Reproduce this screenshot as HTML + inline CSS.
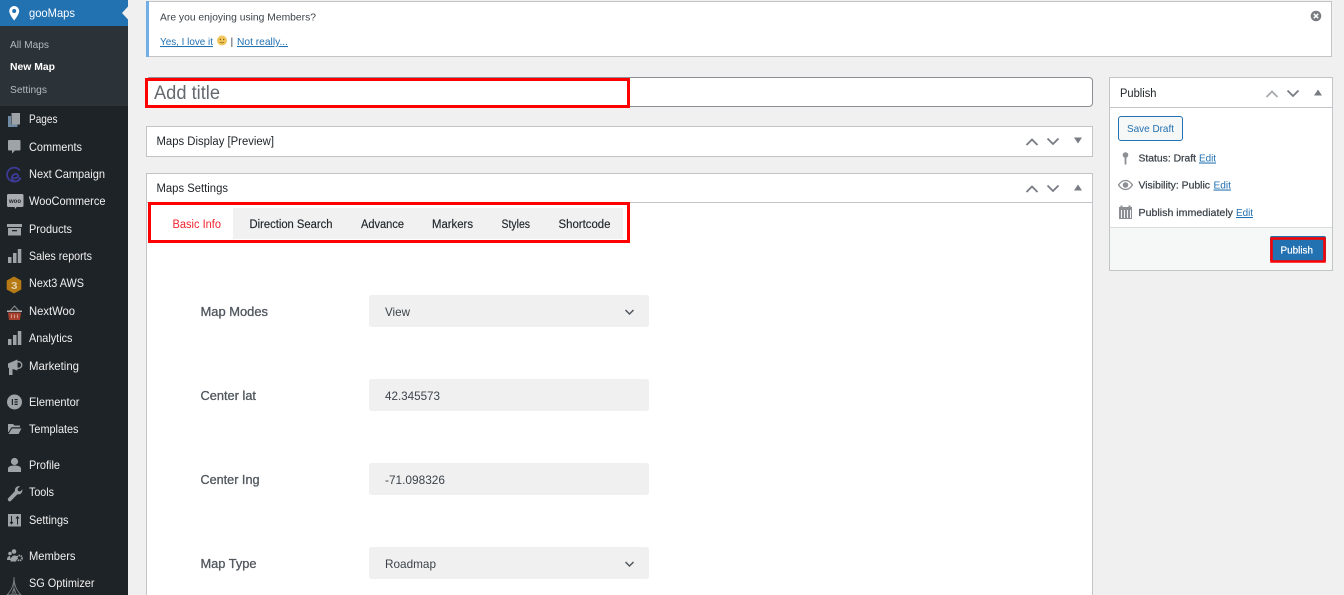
<!DOCTYPE html>
<html lang="en">
<head>
<meta charset="utf-8">
<title>Add New Map</title>
<style>
html,body{margin:0;padding:0;width:1344px;height:595px;overflow:hidden;background:#f0f0f0}
svg{display:block;position:absolute;left:0;top:0}
text{font-family:"Liberation Sans",sans-serif;font-size:12px}
.m{fill:#f0f0f1;font-size:12px}
.s{fill:#b4b9be;font-size:10.5px}
.d{fill:#3c434a;font-size:10.500px}
.l{fill:#2271b1;font-size:10.500px;text-decoration:underline}
.h{fill:#1d2327;font-size:11.500px}
.lb{fill:#50575e;font-size:12.500px;stroke:#50575e;stroke-width:.3px}
.v{fill:#3c434a;font-size:12px}
.t{fill:#1d2327;font-size:11.500px;stroke:#1d2327;stroke-width:.15px}
.ic{fill:#9ea3a8}
.ch{fill:none;stroke:#787c82;stroke-width:1.800}
.b{stroke:#3c434a;stroke-width:.25px}
</style>
</head>
<body>
<svg width="1344" height="595" viewBox="0 0 1344 595" xmlns="http://www.w3.org/2000/svg">
<rect width="1344" height="595" fill="#f0f0f0"/>

<!-- sidebar -->
<rect width="128" height="595" fill="#1d2327"/>
<rect y="26" width="128" height="80" fill="#2c3338"/>
<rect width="128" height="26" fill="#2271b1"/>
<path d="M128 6.500L122 13L128 19.500Z" fill="#f0f0f0"/>
<path d="M14.200 6a5 5 0 0 0-5 5c0 3.500 5 9.500 5 9.500s5-6 5-9.500a5 5 0 0 0-5-5z" fill="#fff"/>
<circle cx="14.200" cy="11" r="2" fill="#2271b1"/>

<text class="m" x="29" y="17" textLength="46" lengthAdjust="spacingAndGlyphs" style="fill:#fff">gooMaps</text>
<text class="s" x="10" y="48" textLength="39" lengthAdjust="spacingAndGlyphs">All Maps</text>
<text class="s" x="10" y="70" textLength="45" lengthAdjust="spacingAndGlyphs" style="fill:#fff;font-weight:700">New Map</text>
<text class="s" x="10" y="93" textLength="37" lengthAdjust="spacingAndGlyphs">Settings</text>

<text class="m" x="29" y="123" textLength="28.500" lengthAdjust="spacingAndGlyphs">Pages</text>
<text class="m" x="29" y="151" textLength="53" lengthAdjust="spacingAndGlyphs">Comments</text>
<text class="m" x="29" y="178" textLength="76" lengthAdjust="spacingAndGlyphs">Next Campaign</text>
<text class="m" x="29" y="205" textLength="76.500" lengthAdjust="spacingAndGlyphs">WooCommerce</text>
<text class="m" x="29" y="233" textLength="43" lengthAdjust="spacingAndGlyphs">Products</text>
<text class="m" x="29" y="260" textLength="63" lengthAdjust="spacingAndGlyphs">Sales reports</text>
<text class="m" x="29" y="287" textLength="55" lengthAdjust="spacingAndGlyphs">Next3 AWS</text>
<text class="m" x="29" y="315" textLength="46" lengthAdjust="spacingAndGlyphs">NextWoo</text>
<text class="m" x="29" y="342" textLength="43.500" lengthAdjust="spacingAndGlyphs">Analytics</text>
<text class="m" x="29" y="370" textLength="50" lengthAdjust="spacingAndGlyphs">Marketing</text>
<text class="m" x="29" y="406" textLength="50.500" lengthAdjust="spacingAndGlyphs">Elementor</text>
<text class="m" x="29" y="433" textLength="49.500" lengthAdjust="spacingAndGlyphs">Templates</text>
<text class="m" x="29" y="469" textLength="31" lengthAdjust="spacingAndGlyphs">Profile</text>
<text class="m" x="29" y="496" textLength="25" lengthAdjust="spacingAndGlyphs">Tools</text>
<text class="m" x="29" y="524" textLength="39.500" lengthAdjust="spacingAndGlyphs">Settings</text>
<text class="m" x="29" y="560" textLength="46.500" lengthAdjust="spacingAndGlyphs">Members</text>
<text class="m" x="29" y="587" textLength="65.500" lengthAdjust="spacingAndGlyphs">SG Optimizer</text>

<!-- sidebar icons -->
<path d="M8 116h3v8.500h6.500v2.500H8z" fill="#6f8ba3"/><path class="ic" d="M11.500 113H20v11.500h-8.500z"/>
<path class="ic" d="M9 140h10.500a1 1 0 0 1 1 1v8.500a1 1 0 0 1-1 1H15l-3 3v-3H9a1 1 0 0 1-1-1V141a1 1 0 0 1 1-1z"/>
<path d="M19.800 170.500A7 7 0 1 0 20.500 177.500c-.5 3-3.500 4-5.500 3.800-3-.5-4-3.500-2.500-5.500s4.500-2.500 5.500-.5-2 3.500-5 2.500" fill="none" stroke="#3d3b96" stroke-width="1.800"/>
<path fill="#a9adb1" d="M8.500 194h13.500a1.500 1.500 0 0 1 1.500 1.500v10a1.500 1.500 0 0 1-1.500 1.500h-5.500l-1 2-1-2H8.500A1.500 1.500 0 0 1 7 205.500v-10A1.500 1.500 0 0 1 8.500 194z"/>
<text x="9" y="203" textLength="12" lengthAdjust="spacingAndGlyphs" style="font-size:6px;fill:#1d2327;font-weight:700">woo</text>
<path class="ic" d="M7 224h15v3H7zM8 228h13v7.500H8z"/><path d="M12 230h5v1.300h-5z" fill="#1d2327"/>
<path class="ic" d="M8 257h3.500v6H8zM13 253h3.500v10H13zM17.800 249h3.500v14h-3.500z"/>
<path d="M14 276.500l7.300 4v9l-7.300 4-7.300-4v-9z" fill="#b57a14"/>
<text x="11" y="289" textLength="6.500" lengthAdjust="spacingAndGlyphs" style="font-size:10px;fill:#e0cfa8;font-weight:700">3</text>
<path d="M10 311l4.500-5 4.500 5" fill="none" stroke="#8a8d90" stroke-width="1"/>
<path d="M7 310.500h15v1.500H7z" fill="#b3b5b7"/><path d="M8 312.500h13l-1 7.500H9z" fill="#a8402e"/>
<path d="M11.500 314.500v3.500M14.500 314.500v3.500M17.500 314.500v3.500" stroke="#d9a79c" stroke-width=".9"/>
<path class="ic" d="M8 339h3.500v6H8zM13 335h3.500v10H13zM17.800 331h3.500v14h-3.500z"/>
<path class="ic" d="M8 363.500l9.500-4v11l-5-1.500v6h-3.500v-7l-1-.5z"/>
<circle cx="18.500" cy="365" r="3.300" fill="none" stroke="#9ea3a8" stroke-width="1.300"/>
<circle cx="14.500" cy="402" r="7.500" fill="#9ea3a8"/><path d="M11.800 399v6h1.200v-6zM14.500 399h3.200v1.200h-3.200zM14.500 401.400h3.200v1.200h-3.200zM14.500 403.800h3.200v1.200h-3.200z" fill="#1d2327"/>
<path class="ic" d="M8 424h5l1.500 1.500H20v1.800H11.500L8.600 432H8z"/><path class="ic" d="M12 428.500h9.500l-3 5.500H8.500z"/>
<circle cx="14.500" cy="461.500" r="3.600" class="ic"/><path class="ic" d="M8 472v-3.500c0-2 3-3 6.500-3s6.500 1 6.500 3V472z"/>
<path class="ic" d="M8.500 498.500l7-7.500c-.6-2.500 1.500-5.500 5-4.800l-2.500 2.500.5 2.300 2.300.5 2-2.300c.5 3.500-2 5.800-4.800 5L11 501.200c-1.200 1-3.500-1.300-2.500-2.700z" transform="translate(-.5 0)"/>
<rect x="8" y="514" width="13" height="12.500" class="ic"/>
<path d="M11.500 516v7.500M10 522l1.500 1.800 1.500-1.800M17.500 524.500v-7.500M16 518.500l1.500-1.800 1.500 1.800" fill="none" stroke="#1d2327" stroke-width="1"/>
<circle cx="10" cy="553.500" r="1.800" class="ic"/><circle cx="14" cy="551.500" r="2.300" class="ic"/><path class="ic" d="M7 560c0-3 1.500-4 3-4l1 4zM10.500 561.500c0-3.500 1.500-6 4-6s3 1.500 3 2.500l-1.500 3.500z"/>
<circle cx="19.500" cy="558" r="2.500" fill="none" stroke="#9ea3a8" stroke-width="1.800" stroke-dasharray="1.400 .7"/>
<path d="M14 577c0 7-2 13-7 18h14c-5-5-7-11-7-18z" fill="none" stroke="#7c8085" stroke-width=".9"/><path d="M14 583v12M11.500 595l2.500-7 2.500 7" fill="none" stroke="#7c8085" stroke-width=".8"/>

<!-- notice -->
<rect x="146.500" y="1.500" width="1185" height="55" fill="#fff" stroke="#c3c4c7"/>
<rect x="146" y="1" width="3" height="56" fill="#72aee6"/>
<text class="d" x="160" y="20.500" textLength="156" lengthAdjust="spacingAndGlyphs">Are you enjoying using Members?</text>
<text class="l" x="160" y="45" textLength="53" lengthAdjust="spacingAndGlyphs">Yes, I love it</text>
<circle cx="222" cy="40.500" r="5" fill="#f2c65a"/><circle cx="220.300" cy="39.500" r=".7" fill="#7a5a10"/><circle cx="223.700" cy="39.500" r=".7" fill="#7a5a10"/><path d="M219.800 42q2.200 1.800 4.400 0" fill="none" stroke="#7a5a10" stroke-width=".6"/>
<text class="d" x="230.500" y="45">|</text>
<text class="l" x="237" y="45" textLength="51" lengthAdjust="spacingAndGlyphs">Not really...</text>
<circle cx="1316" cy="16" r="5.300" fill="#787c82"/><path d="M1313.800 13.800l4.400 4.400M1318.200 13.800l-4.400 4.400" stroke="#fff" stroke-width="1.500"/>

<!-- title -->
<rect x="146.500" y="77.500" width="946" height="29" rx="3.500" fill="#fff" stroke="#8c8f94"/>
<text x="154" y="99" textLength="66" lengthAdjust="spacingAndGlyphs" style="font-size:19px;fill:#646970">Add title</text>
<rect x="146.500" y="79.500" width="482" height="27" fill="none" stroke="#f00" stroke-width="3"/>

<!-- Maps display -->
<rect x="146.500" y="126.500" width="946" height="30" fill="#fff" stroke="#c3c4c7"/>
<text class="h" x="156.500" y="145" textLength="117.500" lengthAdjust="spacingAndGlyphs">Maps Display [Preview]</text>
<path class="ch" d="M1026.500 145l5.500-5.500 5.500 5.500M1047.500 138.500l5.500 5.500 5.500-5.500"/>
<path d="M1074 137.500h8l-4 6z" fill="#787c82"/>

<!-- Maps settings -->
<rect x="146.500" y="173.500" width="946" height="430" fill="#fff" stroke="#c3c4c7"/>
<path d="M147 202.500h945" stroke="#c3c4c7"/>
<text class="h" x="156.500" y="192" textLength="71.500" lengthAdjust="spacingAndGlyphs">Maps Settings</text>
<path class="ch" d="M1026.500 192l5.500-5.500 5.500 5.500M1047.500 185.500l5.500 5.500 5.500-5.500"/>
<path d="M1074 190.500h8l-4-6z" fill="#787c82"/>

<!-- tabs -->
<rect x="233" y="208" width="390" height="31" fill="#f1f1f1"/>
<rect x="149.500" y="203.500" width="479" height="38" fill="none" stroke="#f00" stroke-width="3"/>
<text class="t" x="172.500" y="228" textLength="48.500" lengthAdjust="spacingAndGlyphs" style="fill:#f0232e;stroke:none">Basic Info</text>
<text class="t" x="249.500" y="228" textLength="83" lengthAdjust="spacingAndGlyphs">Direction Search</text>
<text class="t" x="361" y="228" textLength="43" lengthAdjust="spacingAndGlyphs">Advance</text>
<text class="t" x="432" y="228" textLength="41" lengthAdjust="spacingAndGlyphs">Markers</text>
<text class="t" x="501.500" y="228" textLength="28.500" lengthAdjust="spacingAndGlyphs">Styles</text>
<text class="t" x="558.500" y="228" textLength="52" lengthAdjust="spacingAndGlyphs">Shortcode</text>

<!-- form -->
<text class="lb" x="200.500" y="316" textLength="67.500" lengthAdjust="spacingAndGlyphs">Map Modes</text>
<rect x="369" y="295" width="280" height="32" rx="2.500" fill="#f0f0f0"/>
<text class="v" x="385" y="316" textLength="25" lengthAdjust="spacingAndGlyphs">View</text>
<path d="M625.500 310l4 4 4-4" fill="none" stroke="#50575e" stroke-width="1.500"/>

<text class="lb" x="200.500" y="400" textLength="55.500" lengthAdjust="spacingAndGlyphs">Center lat</text>
<rect x="369" y="379" width="280" height="32" rx="2.500" fill="#f0f0f0"/>
<text class="v" x="385" y="400" textLength="55" lengthAdjust="spacingAndGlyphs">42.345573</text>

<text class="lb" x="200.500" y="484" textLength="59" lengthAdjust="spacingAndGlyphs">Center Ing</text>
<rect x="369" y="463" width="280" height="32" rx="2.500" fill="#f0f0f0"/>
<text class="v" x="385" y="484" textLength="60" lengthAdjust="spacingAndGlyphs">-71.098326</text>

<text class="lb" x="200.500" y="568" textLength="56" lengthAdjust="spacingAndGlyphs">Map Type</text>
<rect x="369" y="547" width="280" height="32" rx="2.500" fill="#f0f0f0"/>
<text class="v" x="385" y="568" textLength="51" lengthAdjust="spacingAndGlyphs">Roadmap</text>
<path d="M625.500 562l4 4 4-4" fill="none" stroke="#50575e" stroke-width="1.500"/>

<!-- publish box -->
<rect x="1109.500" y="77.500" width="223" height="193" fill="#fff" stroke="#c3c4c7"/>
<path d="M1110 107.500h222" stroke="#c3c4c7"/>
<rect x="1110" y="227" width="222" height="43" fill="#f6f7f7"/>
<path d="M1110 227.500h222" stroke="#dcdcde"/>
<text class="h" x="1120" y="97" textLength="36.500" lengthAdjust="spacingAndGlyphs">Publish</text>
<path d="M1266.500 97l5.500-5.500 5.500 5.500" fill="none" stroke="#a7aaad" stroke-width="1.800"/>
<path class="ch" d="M1287.500 90.500l5.500 5.500 5.500-5.500"/>
<path d="M1314 95.500h8l-4-6z" fill="#787c82"/>

<rect x="1118.500" y="116.500" width="64" height="24" rx="2.500" fill="#f6f7f7" stroke="#2271b1"/>
<text class="l" x="1127" y="132" textLength="47" lengthAdjust="spacingAndGlyphs" style="text-decoration:none">Save Draft</text>

<circle cx="1125.500" cy="155" r="2.800" fill="#8c8f94"/><path d="M1124.600 156h1.800v8.500h-1.800z" fill="#8c8f94"/>
<text class="d b" x="1138.500" y="161.500" textLength="57.500" lengthAdjust="spacingAndGlyphs">Status: Draft</text>
<text class="l" x="1199" y="161.500" textLength="17" lengthAdjust="spacingAndGlyphs">Edit</text>

<path d="M1118.500 185c2-3 4.500-4.500 7-4.500s5 1.500 7 4.500c-2 3-4.500 4.500-7 4.500s-5-1.500-7-4.500z" fill="none" stroke="#8c8f94" stroke-width="1.300"/><circle cx="1125.500" cy="185" r="2.800" fill="#8c8f94"/>
<text class="d b" x="1138.500" y="188.500" textLength="71.500" lengthAdjust="spacingAndGlyphs">Visibility: Public</text>
<text class="l" x="1213.500" y="188.500" textLength="17.500" lengthAdjust="spacingAndGlyphs">Edit</text>

<path d="M1119 207h13v12h-13z" fill="#8c8f94"/><path d="M1120.500 205.500h2v2.500h-2zM1128.500 205.500h2v2.500h-2z" fill="#8c8f94"/>
<path d="M1121.500 210v8M1124.500 210v8M1127.500 210v8M1130.500 210v8" stroke="#fff" stroke-width=".9"/>
<text class="d b" x="1138.500" y="216" textLength="94.500" lengthAdjust="spacingAndGlyphs">Publish immediately</text>
<text class="l" x="1236" y="216" textLength="17" lengthAdjust="spacingAndGlyphs">Edit</text>

<rect x="1270" y="236" width="56" height="26" rx="2" fill="#2271b1"/>
<rect x="1271.500" y="238.500" width="53" height="23" fill="none" stroke="#f00" stroke-width="2.500"/>
<text x="1280.500" y="253.500" textLength="32.500" lengthAdjust="spacingAndGlyphs" style="font-size:10.500px;fill:#fff;stroke:#fff;stroke-width:.2px">Publish</text>
</svg>
</body>
</html>
